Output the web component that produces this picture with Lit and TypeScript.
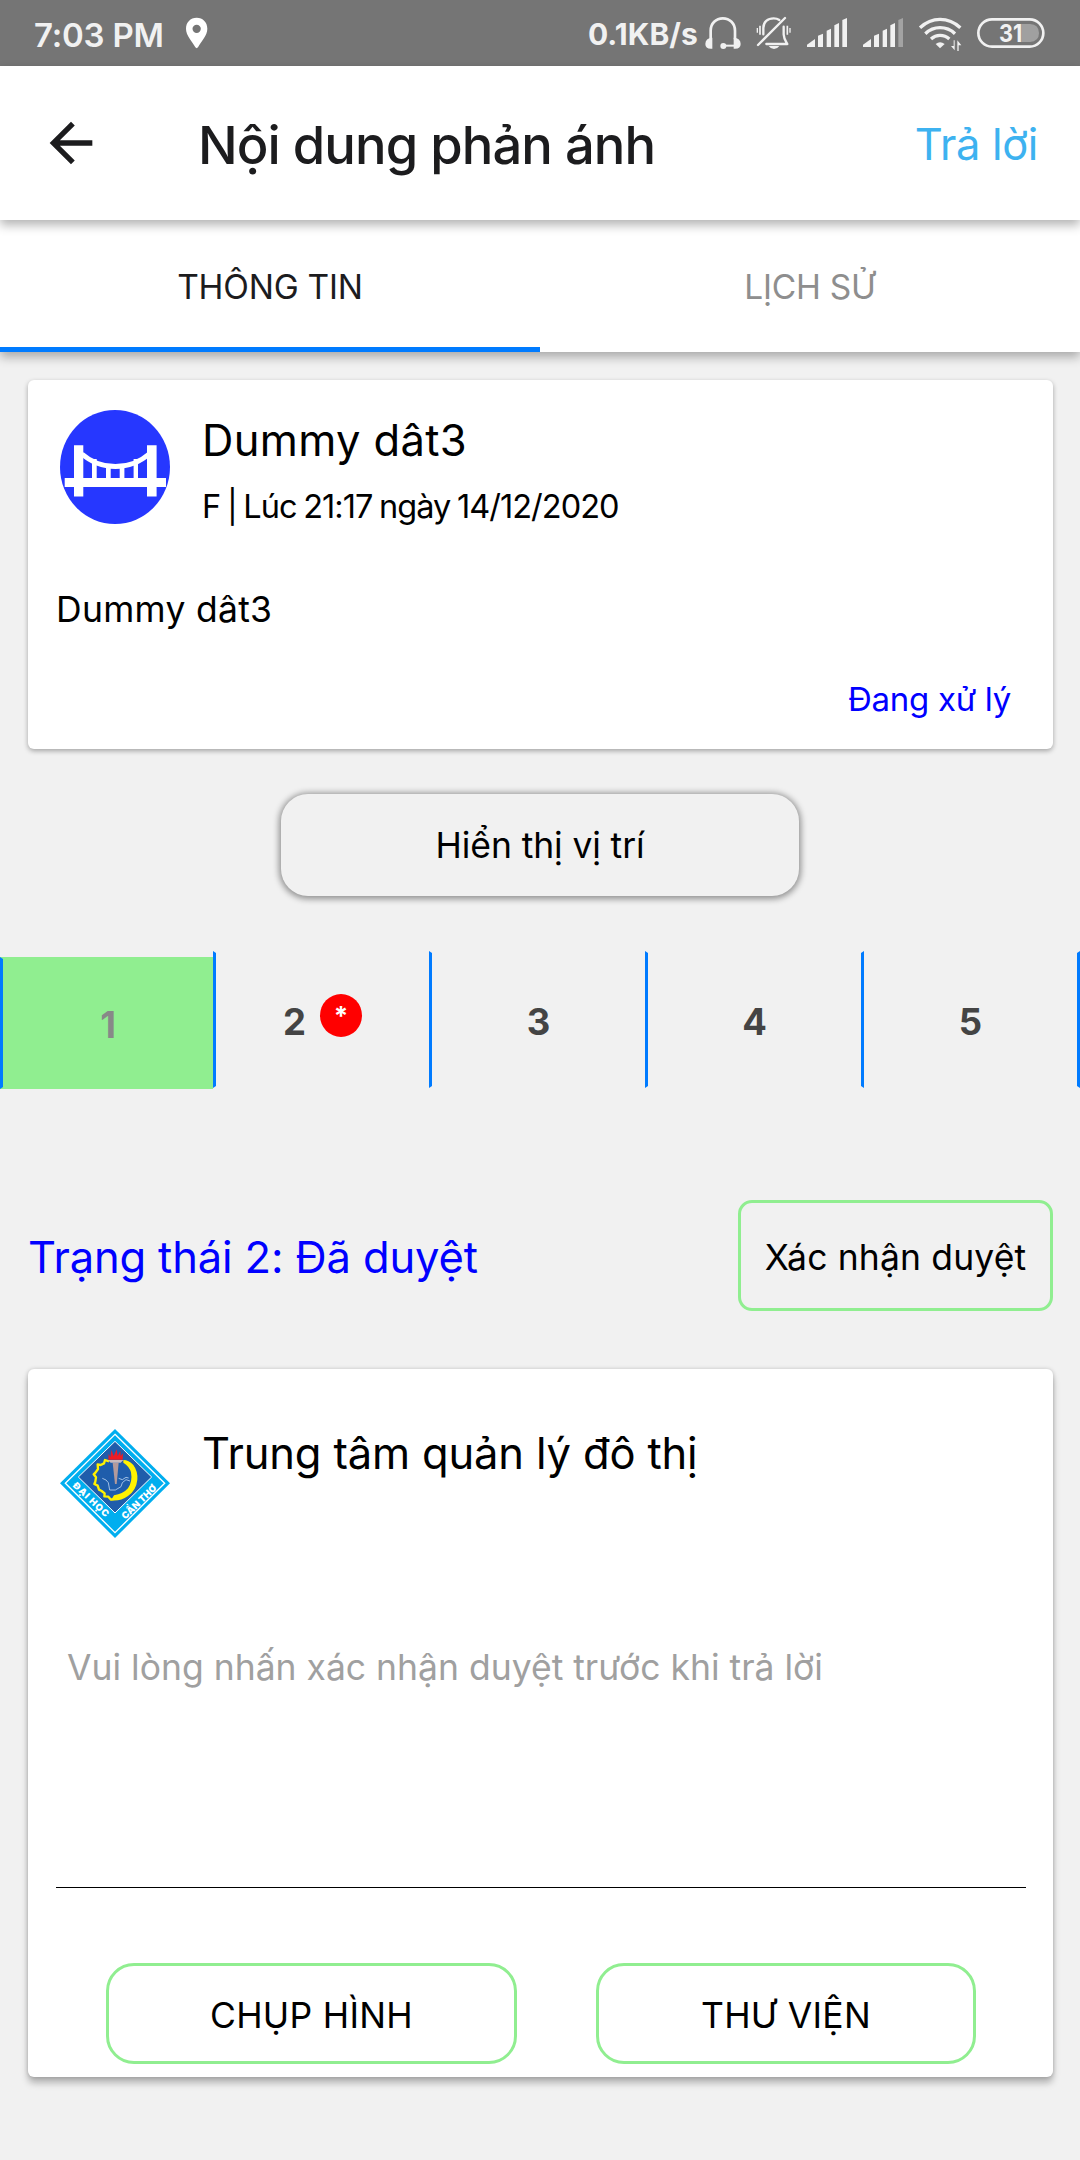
import { LitElement, html, css, svg } from "lit";
import { customElement, property } from "lit/decorators.js";

@customElement("status-bar")
class StatusBar extends LitElement {
  static styles = css`
    :host {
      display: flex;
      align-items: center;
      height: 66px;
      box-sizing: border-box;
      padding: 0 34px 0 34px;
      background: #757575;
      color: #f1f1f1;
      font-weight: 700;
    }
    .time {
      font-size: 33px;
      line-height: 40px;
      padding-top: 4px;
      width: 150px;
      white-space: nowrap;
      font-weight: 600;
      letter-spacing: -0.006em;
    }
    .spacer {
      flex: 1;
    }
    .rate {
      font-size: 30px;
      line-height: 40px;
      padding-top: 2px;
      white-space: nowrap;
      margin-right: 7px;
      letter-spacing: 0.003em;
    }
    svg {
      display: block;
      height: 36px;
      flex: none;
    }
    .bell {
      margin-left: 15px;
    }
    .signal {
      margin-left: 14px;
    }
    .second {
      margin-left: 14px;
    }
    .wifi {
      margin-left: 14px;
    }
    .battery {
      margin-left: 14px;
    }
  `;

  private bars(dim: boolean) {
    return svg`
      <path d="M741 141V134L765 117V141Z"/>
      <path d="M774 141V107L789 101V141Z"/>
      <path d="M800 141V92L813 86V141Z"/>
      <path d="M823 141V76L837 69V141Z"/>
      <path d="M847 141V60L861 54V141Z" fill=${dim ? "#a3a3a3" : "#f1f1f1"}/>`;
  }

  render() {
    return html`
      <span class="time">7:03 PM</span>
      <svg width="26" viewBox="534 45 78 108">
        <path
          fill="#fff"
          fill-rule="evenodd"
          d="M572 53C553 53 540 67 540 86C540 107 558 122 568 142Q572 147 576 142C586 122 604 107 604 86C604 67 591 53 572 53ZM572 74A12.500 12.500 0 1 1 572 99A12.500 12.500 0 1 1 572 74Z"
        />
      </svg>
      <span class="spacer"></span>
      <span class="rate">0.1KB/s</span>
      <svg width="36" viewBox="437 45 108 108" fill="none" stroke="#f1f1f1">
        <path d="M454 118V92C454 70 470 55 490.500 55C511 55 527 70 527 92V118" stroke-width="8" />
        <path d="M459 113V146Q438 148 438 132Q438 114 459 113ZM523 113V146Q544 148 544 132Q544 114 523 113Z" fill="#f1f1f1" stroke="none" />
        <path d="M490 137H528" stroke-width="6" />
        <circle cx="492" cy="138" r="9" fill="#f1f1f1" stroke="none" />
      </svg>
      <svg class="bell" width="36" viewBox="589 45 108 108" fill="none" stroke="#f1f1f1">
        <path d="M611 103V84C611 66 624 55 642 55Q652 55 659 60M672 80V103C673 118 678 123 683 132H620" stroke-width="7" stroke-linejoin="round" stroke-linecap="round" />
        <path d="M595 135L676 54" stroke-width="7" stroke-linecap="round" />
        <path d="M601 77V104M683 77V104" stroke-width="5" />
        <path d="M593 84V98M691 84V98" stroke-width="4" />
        <path d="M627 138H659Q653 147 643 147Q633 147 627 138Z" fill="#f1f1f1" stroke="none" />
      </svg>
      <svg class="signal" width="42" viewBox="738 45 126 108" fill="#f1f1f1">${this.bars(false)}</svg>
      <svg class="second" width="42" viewBox="738 45 126 108" fill="#f1f1f1">${this.bars(true)}</svg>
      <svg class="wifi" width="44" viewBox="1074 45 132 108" fill="none" stroke="#f1f1f1" stroke-width="10">
        <path d="M1080 83Q1107 58 1140 58Q1174 58 1201 83" />
        <path d="M1096 101Q1115 83 1140 83Q1166 83 1185 101" />
        <path d="M1113 117Q1125 106 1140 106Q1156 106 1168 117" />
        <path d="M1127 132Q1140 121 1154 132L1140 145Z" fill="#f1f1f1" stroke="none" />
        <path d="M1184 121V151L1173 138H1181V121ZM1192 153V121L1204 136H1196V153Z" fill="#f1f1f1" stroke="none" />
      </svg>
      <svg class="battery" width="70" viewBox="1248 45 210 108">
        <rect x="1255" y="58" width="195" height="82" rx="41" fill="none" stroke="#f1f1f1" stroke-width="8" />
        <path d="M1384 72H1410Q1437 74 1437 99Q1437 124 1410 126H1384Z" fill="#a0a0a0" />
        <text x="1317" y="126" font-size="73" font-weight="700" fill="#f1f1f1" textLength="70" lengthAdjust="spacingAndGlyphs">31</text>
      </svg>
    `;
  }
}

@customElement("bridge-icon")
class BridgeIcon extends LitElement {
  static styles = css`
    :host {
      display: block;
      flex: none;
      width: 111px;
      height: 114px;
    }
    svg {
      display: block;
    }
  `;
  render() {
    return html`
      <svg width="111" height="114" viewBox="60 410 111 114">
        <ellipse cx="115" cy="467" rx="55" ry="57" fill="#2637ff" />
        <g fill="#fff">
          <path d="M74 445.300H83.300V496.400H74ZM147 445.300H156.600V496.400H147ZM64.700 478H166V487H64.700Z" />
          <path d="M92 459H96.700V479H92ZM106 464H110.700V479H106ZM119.700 464H124.400V479H119.700ZM133.600 459H138V479H133.600Z" />
        </g>
        <path d="M82 454Q96 466.500 115.400 466.500Q135 466.500 149 454" fill="none" stroke="#fff" stroke-width="4.800" />
      </svg>
    `;
  }
}

@customElement("university-emblem")
class UniversityEmblem extends LitElement {
  static styles = css`
    :host {
      display: block;
      flex: none;
      width: 110px;
      height: 109px;
    }
    svg {
      display: block;
    }
  `;
  render() {
    return html`
      <svg width="110" height="109" viewBox="60 57 330 327">
        <path d="M225 57L390 220L225 384L60 220Z" fill="#00aeef" />
        <path d="M225 73L374 220L225 368L76 220Z" fill="none" stroke="#fff" stroke-width="4" />
        <path d="M225 94L335 201L225 309L115 201Z" fill="#1f5dab" stroke="#fff" stroke-width="3" />
        <path
          d="M207 154L195 150L192 160L182 165L173 163L174 177L167 187L161 193L168 202L166 215L163 222L173 227L177 239L185 243L194 250L193 259L205 260L213 269L226 266"
          fill="none"
          stroke="#fff200"
          stroke-width="7"
          stroke-linejoin="round"
        />
        <path
          d="M250 150Q266 150 280 165Q294 184 292 209Q289 240 264 258Q240 275 213 271L222 256Q249 252 264 235Q278 214 273 187Q268 169 250 158Z"
          fill="#fff200"
        />
        <g fill="none" stroke="#b9d2ef" stroke-width="2.500">
          <path d="M187 205L198 210L205 218L209 240L226 240L243 230L247 218L258 209L270 213" />
          <path d="M236 205L247 209L258 202L266 204" />
        </g>
        <path d="M218 158H236L230 222H225Z" fill="#b39a9c" />
        <path d="M203 150H250L242 158H212Z" fill="#c9b9bc" />
        <path d="M205 149L206 131L211 142L214 120L221 138L230 118L233 138L241 122L242 138L249 130L248 149Z" fill="#ed1c24" />
        <g fill="#fff" font-weight="900" font-size="28">
          <text transform="translate(97 229) rotate(43.500)" textLength="136" lengthAdjust="spacing">ĐẠI HỌC</text>
          <text transform="translate(256 329) rotate(-44)" textLength="134" lengthAdjust="spacing">CẦN THƠ</text>
        </g>
      </svg>
    `;
  }
}

@customElement("step-tabs")
class StepTabs extends LitElement {
  @property({ attribute: false }) steps = ["1", "2", "3", "4", "5"];

  static styles = css`
    :host {
      display: grid;
      grid-template-columns: 213px 216px 216px 219px 216px;
      height: 138px;
      font-size: 36.5px;
      font-weight: 700;
      color: #444;
    }
    .step {
      display: flex;
      align-items: center;
      justify-content: center;
      gap: 14px;
      height: 137px;
      box-sizing: border-box;
      border: 0 solid transparent;
      border-top-width: 2px;
      border-bottom-width: 2px;
      padding-top: 4px;
      line-height: 44px;
    }
    .s1 {
      margin-top: 6px;
      height: 132px;
      padding-top: 3px;
      background: #90ee90;
      color: #888;
    }
    .s1,
    .s2,
    .s3,
    .s4 {
      border-left: 3px solid #007bff;
    }
    .s4,
    .s5 {
      border-right: 3px solid #007bff;
    }
    .badge {
      display: flex;
      justify-content: center;
      width: 42px;
      height: 43px;
      margin-top: -13px;
      border-radius: 50%;
      background: #f00;
      color: #fff;
      font-size: 26px;
      line-height: 43px;
    }
  `;
  render() {
    return this.steps.map(
      (s) => html`<div class="step s${s}">
        <span>${s}</span>${s === "2" ? html`<span class="badge">*</span>` : null}
      </div>`
    );
  }
}

@customElement("app-root")
class AppRoot extends LitElement {
  static styles = css`
    :host {
      display: flex;
      flex-direction: column;
      width: 1080px;
      height: 2160px;
      overflow: hidden;
      background: #f1f1f1;
      font-family: Inter, Roboto, "Noto Sans", sans-serif;
      color: #000;
    }
    .header {
      display: flex;
      align-items: center;
      height: 154px;
      box-sizing: border-box;
      padding: 0 42px 0 39px;
      background: #fff;
      position: relative;
      z-index: 2;
      box-shadow: 0 5px 10px rgba(0, 0, 0, 0.3);
    }
    .back {
      display: block;
    }
    .title {
      flex: 1;
      margin: 0 0 0 95px;
      padding-top: 4px;
      font-size: 52.5px;
      line-height: 60px;
      font-weight: 500;
      color: #1c1c1e;
      white-space: nowrap;
      letter-spacing: -0.018em;
    }
    .reply {
      padding-top: 2px;
      font-size: 43.5px;
      line-height: 60px;
      color: #3db2f0;
      letter-spacing: -0.008em;
    }
    .tabs {
      display: flex;
      height: 132px;
      background: #fff;
      position: relative;
      z-index: 1;
      box-shadow: 0 5px 10px rgba(0, 0, 0, 0.3);
    }
    .tab {
      flex: 1;
      display: flex;
      align-items: center;
      justify-content: center;
      box-sizing: border-box;
      padding-top: 6px;
      border-bottom: 5px solid transparent;
      font-size: 33.5px;
      color: #8e8e8e;
      letter-spacing: -0.007em;
    }
    .active {
      color: #1c1c1e;
      border-bottom-color: #007bff;
    }
    .card {
      margin: 0 27px 0 28px;
      box-sizing: border-box;
      background: #fff;
      border-radius: 6px;
      box-shadow: 0 2px 5px rgba(0, 0, 0, 0.32);
    }
    .report {
      margin-top: 28px;
      height: 369px;
      padding: 30px 42px 0 28px;
      display: flex;
      flex-direction: column;
    }
    .person {
      display: flex;
      gap: 31px;
      height: 114px;
      margin-left: 4px;
    }
    .who {
      display: flex;
      flex-direction: column;
      gap: 21px;
      padding-top: 4px;
    }
    .name {
      font-size: 43.5px;
      line-height: 52px;
      white-space: nowrap;
      letter-spacing: 0.008em;
    }
    .when {
      font-size: 32.5px;
      line-height: 40px;
      white-space: nowrap;
      letter-spacing: -0.03em;
      word-spacing: -1.5px;
    }
    .body {
      margin-top: 64px;
      font-size: 35.5px;
      line-height: 44px;
      letter-spacing: 0.008em;
    }
    .state {
      margin-top: 47px;
      align-self: flex-end;
      font-size: 33px;
      line-height: 40px;
      color: #00f;
      letter-spacing: -0.0085em;
    }
    .locate {
      display: flex;
      align-items: center;
      justify-content: center;
      align-self: center;
      width: 518px;
      height: 102px;
      margin-top: 45px;
      border-radius: 27px;
      background: #f1f1f1;
      box-shadow: 0 1px 6px 2px rgba(0, 0, 0, 0.4);
      font-size: 35.5px;
      letter-spacing: -0.003em;
    }
    .steps {
      margin-top: 55px;
    }
    .progress {
      display: flex;
      align-items: center;
      justify-content: space-between;
      height: 111px;
      margin: 111px 27px 0 28px;
    }
    .stage {
      padding-top: 3px;
      font-size: 43.5px;
      color: #00f;
      letter-spacing: -0.0035em;
    }
    .btn {
      display: flex;
      align-items: center;
      justify-content: center;
      box-sizing: border-box;
      border: 3px solid #90ee90;
      font-size: 35.5px;
      padding-top: 3px;
      white-space: nowrap;
    }
    .confirm {
      width: 315px;
      height: 111px;
      border-radius: 14px;
      letter-spacing: 0.004em;
    }
    .answer {
      flex: none;
      margin-top: 58px;
      height: 708px;
      padding: 60px 27px 0 28px;
      box-shadow: 0 6px 7px rgba(0, 0, 0, 0.26), 0 0 4px rgba(0, 0, 0, 0.18);
    }
    .unit {
      display: flex;
      gap: 32px;
      height: 110px;
      padding-left: 4px;
    }
    .unit .name {
      margin-top: -2px;
      letter-spacing: -0.0035em;
    }
    .field {
      height: 349px;
      box-sizing: border-box;
      padding: 107px 0 0 11px;
      border-bottom: 1px solid #000;
      font-size: 35.5px;
      line-height: 44px;
      color: #a0a0a0;
      white-space: nowrap;
    }
    .actions {
      display: flex;
      gap: 79px;
      margin: 75px 0 0 50px;
      letter-spacing: 0.018em;
    }
    .photo {
      width: 411px;
      height: 101px;
      border-radius: 28px;
    }
    .library {
      width: 380px;
      height: 101px;
      border-radius: 28px;
    }
  `;

  render() {
    return html`
      <status-bar></status-bar>
      <div class="header">
        <svg class="back" width="64" height="64" viewBox="0 0 24 24" fill="#1c1c1e">
          <path d="M20 11H7.830l5.590-5.590L12 4l-8 8 8 8 1.410-1.410L7.830 13H20v-2z" />
        </svg>
        <h1 class="title">Nội dung phản ánh</h1>
        <span class="reply">Trả lời</span>
      </div>
      <div class="tabs">
        <div class="tab active"><span>THÔNG TIN</span></div>
        <div class="tab"><span>LỊCH SỬ</span></div>
      </div>
      <div class="card report">
        <div class="person">
          <bridge-icon></bridge-icon>
          <div class="who">
            <span class="name">Dummy dât3</span>
            <span class="when">F | Lúc 21:17 ngày 14/12/2020</span>
          </div>
        </div>
        <span class="body">Dummy dât3</span>
        <span class="state">Đang xử lý</span>
      </div>
      <div class="locate"><span>Hiển thị vị trí</span></div>
      <step-tabs class="steps"></step-tabs>
      <div class="progress">
        <span class="stage">Trạng thái 2: Đã duyệt</span>
        <div class="btn confirm"><span>Xác nhận duyệt</span></div>
      </div>
      <div class="card answer">
        <div class="unit">
          <university-emblem></university-emblem>
          <span class="name">Trung tâm quản lý đô thị</span>
        </div>
        <div class="field">Vui lòng nhấn xác nhận duyệt trước khi trả lời</div>
        <div class="actions">
          <div class="btn photo"><span>CHỤP HÌNH</span></div>
          <div class="btn library"><span>THƯ VIỆN</span></div>
        </div>
      </div>
    `;
  }
}
